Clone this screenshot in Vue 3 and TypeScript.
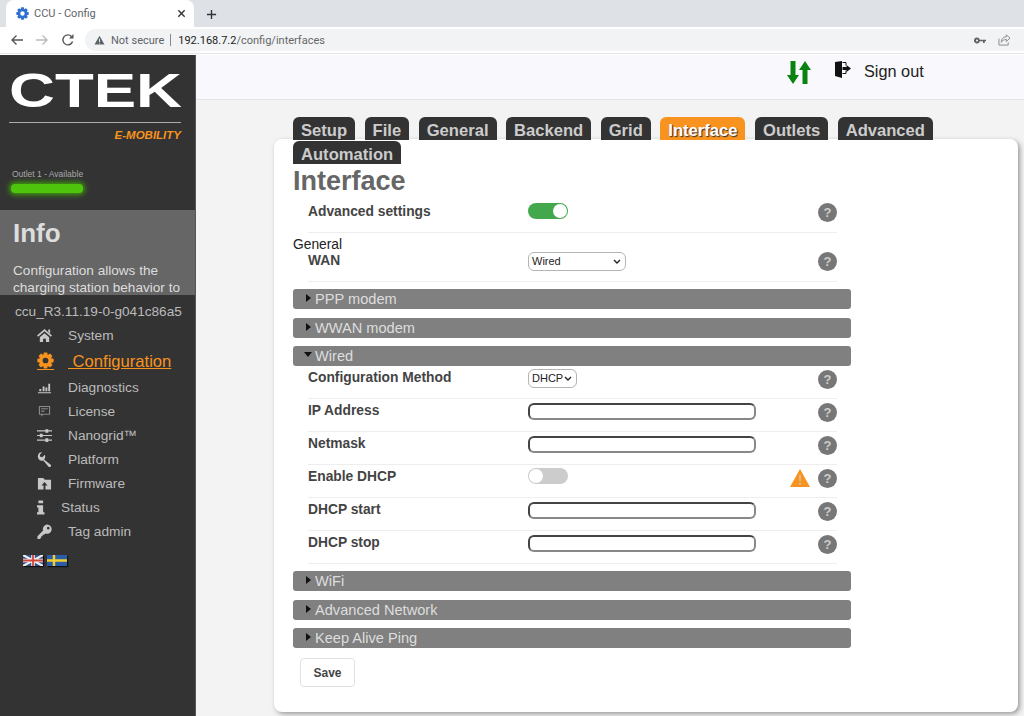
<template>
  <div class="page">
    <div class="browser">
      <div class="tabstrip">
        <div class="browser-tab">
          <svg class="favicon" viewBox="0 0 16 16"><path :d="gearPath" fill="#2f6fd0" fill-rule="evenodd" /></svg>
          <span class="tab-title">CCU - Config</span>
          <svg class="tab-close" viewBox="0 0 10 10"><path d="M1.5 1.5l7 7M8.5 1.5l-7 7" stroke="#333" stroke-width="1.5" /></svg>
        </div>
        <svg class="new-tab" viewBox="0 0 12 12"><path d="M6 1v10M1 6h10" stroke="#333" stroke-width="1.5" /></svg>
      </div>
      <div class="toolbar">
        <svg class="tool" viewBox="0 0 14 14"><path d="M13 7H2M6.5 2.5 2 7l4.5 4.5" fill="none" stroke="#555" stroke-width="1.4" /></svg>
        <svg class="tool" viewBox="0 0 14 14"><path d="M1 7h11M7.5 2.5 12 7l-4.5 4.5" fill="none" stroke="#bbb" stroke-width="1.4" /></svg>
        <svg class="tool" viewBox="0 0 14 14"><path d="M11.6 8.5A5 5 0 1 1 10.5 3.400" fill="none" stroke="#555" stroke-width="1.4" /><path d="M12.5 1v4.500H8Z" fill="#555" /></svg>
        <div class="omnibox">
          <svg class="secure-icon" viewBox="0 0 14 13"><path d="M7 1 13.5 12.5H.5Z" fill="#5f6368" /><path d="M6.4 5h1.200v4H6.400ZM6.400 10h1.200v1.200H6.400Z" fill="#f1f3f4" /></svg>
          <span class="not-secure">Not secure</span>
          <span class="omni-sep"></span>
          <span class="url"><b>192.168.7.2</b>/config/interfaces</span>
          <svg class="omni-key" viewBox="0 0 14 8"><path fill-rule="evenodd" d="M3.5.5A3.500 3.500 0 0 1 6.800 3H14v2h-1.500v2H10.500V5H6.800A3.500 3.500 0 1 1 3.500.5ZM3.500 2.800a1.200 1.200 0 1 0 0 2.400 1.200 1.200 0 0 0 0-2.400Z" fill="#5f6368" /></svg>
          <svg class="omni-share" viewBox="0 0 14 13"><path d="M9 1l4 3.500L9 8V6C6 6 4.500 7 3.500 9 3.500 6 5 3 9 3ZM1 5v7h10V9" fill="none" stroke="#888" stroke-width="1" /></svg>
        </div>
      </div>
    </div>

    <div class="app">
      <aside class="sidebar">
        <div class="logo">
          <svg class="logo-word" viewBox="0 0 173 56"><text x="0" y="45" textLength="173" lengthAdjust="spacingAndGlyphs" class="logo-text">CTEK</text></svg>
          <div class="logo-rule"></div>
          <div class="logo-sub">E-MOBILITY</div>
        </div>

        <div class="outlet">
          <div class="outlet-name">Outlet 1 - Available</div>
          <div class="outlet-bar"></div>
        </div>

        <div class="info">
          <h2>Info</h2>
          <p>Configuration allows the charging station behavior to</p>
        </div>

        <div class="version">ccu_R3.11.19-0-g041c86a5</div>

        <nav class="nav">
          <a v-for="item in navItems" :key="item.label" :class="['nav-item', item.cls]">
            <svg class="nav-icon" viewBox="0 0 16 16"><path :d="item.d" fill-rule="evenodd" /></svg>
            <span class="nav-label">{{ item.label }}</span>
          </a>
        </nav>

        <div class="flags">
          <svg class="flag" viewBox="0 0 20 11">
            <rect width="20" height="11" fill="#33508f" />
            <path d="M0 0l20 11M20 0 0 11" stroke="#eee" stroke-width="2.2" />
            <path d="M10 0v11M0 5.500h20" stroke="#eee" stroke-width="3.6" />
            <path d="M10 0v11M0 5.500h20" stroke="#d2453a" stroke-width="1.8" />
          </svg>
          <svg class="flag" viewBox="0 0 20 11">
            <rect width="20" height="11" fill="#2a5da8" />
            <path d="M7 0v11M0 5.500h20" stroke="#f2cf2e" stroke-width="2.4" />
          </svg>
        </div>
      </aside>

      <main class="main">
        <header class="topbar">
          <svg class="updown" viewBox="0 0 24 23">
            <path d="M3.5 0h5v14H12L6 23 0 14h3.500Z" fill="#0a820f" />
            <path d="M15.5 23h5V9H24L18 0l-6 9h3.500Z" fill="#0a820f" />
          </svg>
          <svg class="signout" viewBox="0 0 16 17">
            <path d="M0 1 7 0v17L0 15Z" fill="#111" />
            <path d="M7.5 1.500H11v3M11 9.500v3H7.500" fill="none" stroke="#111" stroke-width="1" />
            <path d="M7.5 6H11.500V4L16 7.500 11.500 11V9H7.500Z" fill="#111" />
          </svg>
          <span class="signout-text">Sign out</span>
        </header>

        <div class="content">
          <div class="tabs">
            <a v-for="tab in tabs" :key="tab" :class="['tab', { active: tab === 'Interface' }]">{{ tab }}</a>
          </div>

          <section class="card">
            <h1>Interface</h1>

            <div class="row">
              <label>Advanced settings</label>
              <div class="control"><span class="toggle on"></span></div>
              <span class="help">?</span>
            </div>

            <div class="group-name">General</div>
            <div class="row tight">
              <label>WAN</label>
              <div class="control">
                <div class="select wan">Wired<svg class="chevron" viewBox="0 0 8 5"><path d="M1 1l3 3 3-3" fill="none" stroke="#222" stroke-width="1.4" /></svg></div>
              </div>
              <span class="help">?</span>
            </div>

            <div class="bar first"><i class="arrow"></i>PPP modem</div>
            <div class="bar"><i class="arrow"></i>WWAN modem</div>
            <div class="bar open"><i class="arrow down"></i>Wired</div>

            <div v-for="row in wiredRows" :key="row.label" class="row wired">
              <label>{{ row.label }}</label>
              <div class="control">
                <div v-if="row.kind === 'select'" class="select method">DHCP<svg class="chevron" viewBox="0 0 8 5"><path d="M1 1l3 3 3-3" fill="none" stroke="#222" stroke-width="1.4" /></svg></div>
                <span v-else-if="row.kind === 'toggle'" class="toggle"></span>
                <input v-else class="field" type="text" />
              </div>
              <svg v-if="row.warn" class="warn" viewBox="0 0 20 18">
                <path d="M10 0 20 18H0Z" fill="#f7931e" />
                <path d="M9.2 6h1.600l-.3 6.500h-1ZM9.200 14h1.600v1.700H9.200Z" fill="#ccc" />
              </svg>
              <span class="help">?</span>
            </div>

            <div class="bar first"><i class="arrow"></i>WiFi</div>
            <div class="bar"><i class="arrow"></i>Advanced Network</div>
            <div class="bar"><i class="arrow"></i>Keep Alive Ping</div>

            <button class="save">Save</button>
          </section>
        </div>
      </main>
    </div>
  </div>
</template>

<script setup lang="ts">
// gear outline shared by the favicon and the Configuration menu item
const makeGear = (teeth: number) => {
  const pts: string[] = []
  const step = (Math.PI * 2) / teeth
  for (let i = 0; i < teeth; i++) {
    const a = i * step
    const corners: [number, number][] = [
      [5.6, a - step * 0.5],
      [7.8, a - step * 0.26],
      [7.8, a + step * 0.26],
      [5.6, a + step * 0.5]
    ]
    for (const [r, t] of corners) {
      pts.push((8 + r * Math.cos(t)).toFixed(2) + ' ' + (8 + r * Math.sin(t)).toFixed(2))
    }
  }
  return 'M' + pts.join('L') + 'Z M8 5.3a2.7 2.7 0 1 0 0 5.4 2.7 2.7 0 0 0 0-5.4Z'
}

const gearPath = makeGear(8)

const navItems = [
  { label: 'System', cls: 'system', d: 'M8 1 16 8l-1.200 1.300L8 3.500 1.200 9.300 0 8Z M12 1.500h2v4.300l-2-1.700Z M3 9.800 8 5.500l5 4.300V15H9.500v-3.500h-3V15H3Z' },
  { label: '\u00a0Configuration', cls: 'current', d: gearPath },
  { label: 'Diagnostics', cls: 'diag', d: 'M1 13h14v1.200H1Z M2.500 9.500h2V12h-2Z M6 7h2v5H6Z M9 8h2v4H9Z M12 4h2v8h-2Z' },
  { label: 'License', cls: 'license', d: 'M2 2h12v9.500H6.500L4.500 13.500v-2H2Z M3.200 3.200v7.100h9.600V3.200Z M4.500 4.500h7v1.200h-7Z M4.500 7h3.500v1.200H4.500Z' },
  { label: 'Nanogrid\u2122', cls: '', d: 'M0 2.500h9V1.200h3v1.300h4v1.200h-4V5H9V3.700H0Z M0 7.400h3V6.100h3v1.300h10v1.200H6v1.300H3V8.600H0Z M0 12.300h9V11h3v1.300h4v1.200h-4v1.300H9v-1.300H0Z' },
  { label: 'Platform', cls: '', d: 'M5.500.3 3 2.800l.5 2.200 2.200.5L8.200 3a4.300 4.300 0 0 1-.7 5l6.800 5.300a1.700 1.700 0 0 1 .2 2.400 1.700 1.700 0 0 1-2.400-.2L6.700 9A4.300 4.300 0 0 1 1 4 4.300 4.300 0 0 1 5.500.3Z' },
  { label: 'Firmware', cls: '', d: 'M1 2h5.500l2 2H15v10.500H1Z M8 6.500 4.800 10H7v4.500h2V10h2.200Z' },
  { label: 'Status', cls: 'status', d: 'M1.500.5h5v3h-5Z M0 5.500h6.500V13H8v2.500H0V13h1.500V8H0Z' },
  { label: 'Tag admin', cls: '', d: 'M10.500.5a5 5 0 1 1-1.600 9.700L7.600 11.500H6v1.600H4.400v1.600L3 16H.5v-3l6-6a5 5 0 0 1 4-6.500Z M12 3a1.400 1.400 0 1 0 0 2.800A1.400 1.400 0 0 0 12 3Z' }
]

const tabs = ['Setup', 'File', 'General', 'Backend', 'Grid', 'Interface', 'Outlets', 'Advanced', 'Automation']

const wiredRows = [
  { label: 'Configuration Method', kind: 'select' },
  { label: 'IP Address', kind: 'input' },
  { label: 'Netmask', kind: 'input' },
  { label: 'Enable DHCP', kind: 'toggle', warn: true },
  { label: 'DHCP start', kind: 'input' },
  { label: 'DHCP stop', kind: 'input' }
]
</script>

<style>
html, body { margin: 0; height: 100%; overflow: hidden; }
</style>

<style scoped>
.page {
  width: 1024px;
  height: 716px;
  display: flex;
  flex-direction: column;
  overflow: hidden;
  font-family: "Liberation Sans", Arial, sans-serif;
}

/* browser chrome */
.browser { height: 55px; flex-shrink: 0; background: #fff; font-family: Roboto, sans-serif; }
.tabstrip { height: 27px; background: #dee1e6; display: flex; align-items: flex-end; padding-left: 6px; }
.browser-tab {
  width: 188px;
  height: 27px;
  background: #fff;
  border-radius: 8px 8px 0 0;
  display: flex;
  align-items: center;
  box-sizing: border-box;
  padding-left: 10px;
}
.favicon { width: 13px; height: 13px; }
.tab-title { margin-left: 5px; font-size: 11px; color: #5f6368; flex: 1; }
.tab-close { width: 9px; height: 9px; margin-right: 8px; }
.new-tab { width: 11px; height: 11px; margin: 0 0 7px 12px; }
.toolbar { height: 27px; display: flex; align-items: center; padding-left: 10px; border-bottom: 1px solid #e6e6e6; box-sizing: border-box; }
.tool { width: 14px; height: 14px; margin-right: 11px; }
.tool:nth-child(3) { margin-left: 1px; margin-right: 10px; }
.omnibox {
  flex: 1;
  height: 22px;
  background: #f1f3f4;
  border-radius: 11px 0 0 11px;
  display: flex;
  align-items: center;
  padding-left: 9px;
  font-size: 11px;
}
.secure-icon { width: 11px; height: 10px; }
.not-secure { margin-left: 6px; color: #5f6368; }
.omni-sep { width: 1px; height: 12px; background: #888; margin: 0 7px 0 6px; }
.url { color: #666; flex: 1; }
.url b { font-weight: 400; color: #222; }
.omni-key { width: 12px; height: 7px; margin-right: 12px; }
.omni-share { width: 13px; height: 12px; margin-right: 13px; }

.app { flex: 1; display: flex; min-height: 0; }

/* sidebar */
.sidebar { width: 196px; flex-shrink: 0; background: #333; box-sizing: border-box; border-right: 1px solid #555; overflow: hidden; }
.logo { padding: 7px 14px 0 9px; }
.logo-word { display: block; width: 173px; height: 56px; }
.logo-text { font-family: "Liberation Sans", sans-serif; font-weight: 700; font-size: 49px; fill: #fff; }
.logo-rule { height: 1px; background: #aaa; margin-top: 4px; }
.logo-sub { font-size: 11.5px; font-weight: 700; font-style: italic; color: #f7931e; text-align: right; margin-top: 6px; line-height: 13px; }
.outlet { padding: 27px 0 0 12px; height: 52px; }
.outlet-name { font-size: 8.5px; color: #aaa; line-height: 11px; }
.outlet-bar { width: 72px; height: 9px; margin: 4px 0 0 -1px; background: #4fc40c; border-radius: 4px; box-shadow: 0 0 5px 2px #3f9a0e; }
.info { height: 85px; margin-top: -11px; overflow: hidden; background: #666; color: #ddd; padding: 0 10px 0 13px; box-sizing: border-box; }
.info h2 { margin: 0; padding-top: 8px; font-size: 26px; line-height: 30px; font-weight: 700; }
.info p { margin: 14px 0 0; font-size: 13.6px; line-height: 17px; }
.version { font-size: 13.6px; color: #bbb; padding-left: 15px; margin-top: 9px; line-height: 16px; }
.nav { margin-top: 3px; display: flex; flex-direction: column; padding-left: 37px; }
.nav-item { height: 24px; display: flex; align-items: center; color: #bbb; font-size: 13.7px; }
.nav-icon { width: 15px; height: 15px; fill: #c8c8c8; margin-right: 16px; flex-shrink: 0; }
.nav-item.current { height: 28px; color: #f7931e; font-size: 16.6px; text-decoration: underline; }
.nav-item.current .nav-label { margin-top: 2px; }
.nav-item.current .nav-icon { width: 17px; height: 17px; fill: #f7931e; margin-right: 14px; border-bottom: 1px solid #f7931e; }
.nav-item.license .nav-icon { fill: #888; }
.nav-item.status .nav-icon { margin-right: 9px; }
.flags { display: flex; gap: 4px; padding: 12px 0 0 23px; }
.flag { width: 20px; height: 11px; box-shadow: 1px 1px 1px #111; }

/* top bar */
.main { flex: 1; min-width: 0; background: #f3f3f3; display: flex; flex-direction: column; }
.topbar {
  height: 45px;
  flex-shrink: 0;
  box-sizing: border-box;
  background: #f9f9fd;
  border-bottom: 1px solid #e4e4e6;
  display: flex;
  align-items: flex-start;
  padding: 6px 0 0 591px;
}
.updown { width: 24px; height: 23px; }
.signout { width: 16px; height: 17px; margin-left: 24px; }
.signout-text { font-size: 16.3px; color: #222; margin-left: 13px; margin-top: 1px; line-height: 19px; }

.content { padding: 17px 6px 0 78px; }

/* page tabs sit across the top of the card */
.tabs {
  position: relative;
  z-index: 1;
  display: flex;
  flex-wrap: wrap;
  gap: 1px 9.5px;
  margin: 0 0 -25px 19px;
  width: 650px;
}
.tab {
  height: 23px;
  padding: 0 8px;
  background: #333;
  color: #ccc;
  border-radius: 6px 6px 0 0;
  font-size: 16.6px;
  font-weight: 700;
  line-height: 27px;
  overflow: hidden;
}
.tab.active { background: #f7931e; color: #fff; text-shadow: 1px 1px 1px #333; }

.card {
  height: 573px;
  box-sizing: border-box;
  background: #fff;
  border-radius: 8px;
  box-shadow: 2px 2px 5px #999;
  padding: 25px 0 0 19px;
}
.card h1 { margin: 0; font-size: 27px; line-height: 34px; padding-bottom: 2px; font-weight: 700; color: #666; }

.row {
  display: flex;
  align-items: flex-start;
  width: 529px;
  height: 33px;
  box-sizing: border-box;
  margin-left: 15px;
  padding-top: 3px;
  border-bottom: 1px solid #eee;
}
.row.tight { height: 30px; padding-top: 0; }
.row label { width: 220px; flex-shrink: 0; margin-top: 1px; font-size: 13.8px; font-weight: 700; color: #444; line-height: 16px; }
.control { flex: 1; min-width: 0; }
.group-name { font-size: 13.8px; color: #222; line-height: 16px; margin-top: 4px; margin-bottom: -1px; }

.help {
  width: 19px;
  height: 19px;
  border-radius: 50%;
  background: #777;
  color: #ccc;
  font-size: 13px;
  font-weight: 700;
  line-height: 19px;
  text-align: center;
  flex-shrink: 0;
}
.row.wired .help { margin-top: 1px; }
.warn { width: 20px; height: 18px; margin-right: 8px; margin-top: 1px; }

.toggle {
  display: block;
  position: relative;
  width: 40px;
  height: 16px;
  border-radius: 8px;
  background: #ccc;
}
.toggle::after {
  content: "";
  position: absolute;
  top: 1px;
  left: 1px;
  width: 14px;
  height: 14px;
  border-radius: 50%;
  background: #fff;
}
.toggle.on { background: #43a84c; }
.toggle.on::after { left: 25px; }

.select {
  position: relative;
  height: 19px;
  box-sizing: border-box;
  border: 1px solid #b4b4b4;
  border-radius: 6px;
  background: #fff;
  font-size: 11px;
  line-height: 17px;
  color: #222;
  padding-left: 3px;
}
.select.wan { width: 98px; }
.select.method { width: 49px; }
.chevron { position: absolute; right: 4px; top: 6px; width: 8px; height: 5px; }
.field {
  display: block;
  width: 228px;
  height: 17px;
  box-sizing: border-box;
  margin-top: 1px;
  border: 2px solid #444;
  border-bottom-color: #888;
  border-right-color: #888;
  border-radius: 6px;
  background: #fff;
  padding: 0;
}

.bar {
  position: relative;
  width: 558px;
  height: 20px;
  margin-bottom: 8.5px;
  box-sizing: border-box;
  padding-left: 22px;
  background: #808080;
  border-radius: 3px;
  color: #ddd;
  font-size: 14.6px;
  line-height: 21px;
}
.bar.first { margin-top: 7px; }
.bar.open { margin-bottom: 0; }
.arrow {
  position: absolute;
  left: 13px;
  top: 5px;
  border-style: solid;
  border-width: 4.5px 0 4.5px 5px;
  border-color: transparent transparent transparent #111;
}
.arrow.down {
  left: 11px;
  top: 6px;
  border-width: 5px 4.5px 0;
  border-color: #111 transparent transparent;
}

.save {
  display: block;
  width: 55px;
  height: 29px;
  margin: 10px 0 0 7px;
  padding: 0;
  background: #fff;
  border: 1.5px solid #e2e2e2;
  border-radius: 4px;
  font-family: "Liberation Sans", sans-serif;
  font-size: 12px;
  font-weight: 700;
  color: #444;
}
</style>
